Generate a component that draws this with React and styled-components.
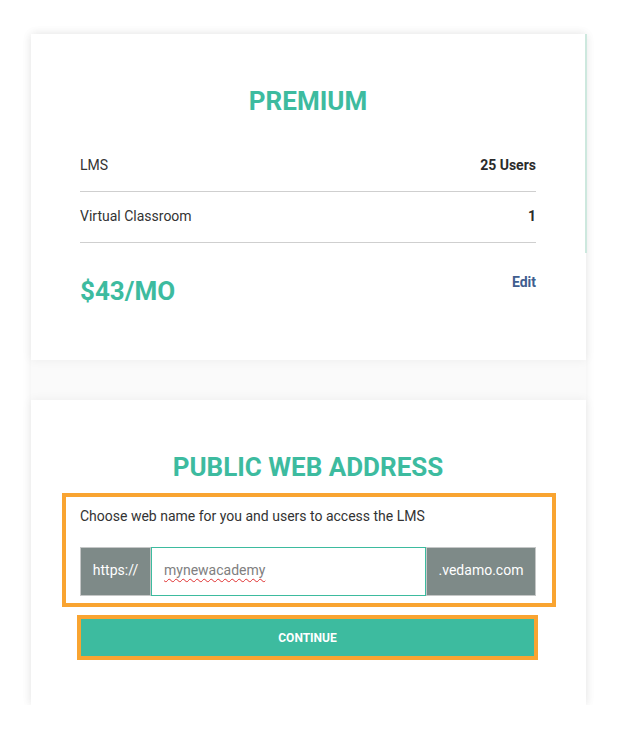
import React from 'react';
import styled, { createGlobalStyle } from 'styled-components';

const GlobalStyle = createGlobalStyle`
  body {
    margin: 0;
    background: #fff;
    font-family: Roboto, 'Liberation Sans', Arial, sans-serif;
    color: #333;
  }
`;

const Page = styled.div`
  padding: 34px 0 0 31px;
`;

const Panel = styled.div`
  position: relative;
  width: 555px;
  display: flex;
  flex-direction: column;
  gap: 40px;
  background: #fafafa;
  box-shadow: 0 0 10px rgba(0, 0, 0, 0.07);
`;

const ScrollThumb = styled.div`
  position: absolute;
  top: 0;
  right: -1px;
  width: 2px;
  height: 219px;
  background: #cde8de;
`;

const Card = styled.section`
  background: #fff;
  padding: 52px 50px ${(p) => p.$bottom}px 49px;
  box-shadow: 0 0 10px rgba(0, 0, 0, 0.06);
  display: flex;
  flex-direction: column;
`;

const Title = styled.h2`
  margin: 0;
  font-size: 26px;
  line-height: 30px;
  font-weight: 700;
  color: #3dbb9f;
  text-align: center;
  text-transform: uppercase;
`;

const Rows = styled.div`
  margin-top: 25px;
`;

const Row = styled.div`
  display: flex;
  justify-content: space-between;
  padding: 14px 0 16px;
  border-bottom: 1px solid #cfcfcf;
  font-size: 14px;
  line-height: 20px;
`;

const Value = styled.span`
  font-weight: 700;
  color: #2b2b2b;
`;

const PriceRow = styled.div`
  display: flex;
  justify-content: space-between;
  align-items: flex-start;
  margin-top: 33px;
`;

const Price = styled.div`
  font-size: 26px;
  line-height: 30px;
  font-weight: 700;
  color: #3dbb9f;
`;

const EditLink = styled.a`
  margin-top: -2px;
  font-size: 14px;
  line-height: 16px;
  font-weight: 700;
  color: #3f5e8f;
  text-decoration: none;
  cursor: pointer;
`;

const Highlight = styled.div`
  border: 4px solid #f9a431;
  margin: ${(p) => p.$margin};
`;

const Field = styled.div`
  padding: 9px 16px 7px 14px;
`;

const Hint = styled.p`
  margin: 0 0 21px;
  font-size: 14px;
  line-height: 20px;
  color: #333;
`;

const AddressGroup = styled.div`
  display: flex;
  height: 49px;
`;

const Addon = styled.div`
  width: ${(p) => p.$width}px;
  box-sizing: border-box;
  display: flex;
  align-items: center;
  justify-content: center;
  padding-bottom: 4px;
  background: #7e8a88;
  border: 1px solid #c5c7c7;
  color: #fff;
  font-size: 14px;
`;

const NameInput = styled.div`
  flex: 1;
  display: flex;
  align-items: center;
  padding: 0 0 4px 12px;
  border: 1px solid #3dbb9f;
  font-size: 14px;
  color: #808080;
  span {
    text-decoration: underline wavy #e03030;
    text-decoration-thickness: 1px;
    text-underline-offset: 3px;
  }
`;

const ContinueButton = styled.button`
  display: block;
  width: 100%;
  height: 37px;
  border: none;
  background: #3dbb9f;
  color: #fff;
  font-family: Roboto, 'Liberation Sans', Arial, sans-serif;
  font-size: 12px;
  font-weight: 700;
  text-transform: uppercase;
  cursor: pointer;
`;

export default function App() {
  return (
    <Page>
      <GlobalStyle />
      <Panel>
        <ScrollThumb />
        <Card $bottom={54}>
          <Title>Premium</Title>
          <Rows>
            <Row>
              <span>LMS</span>
              <Value>25 Users</Value>
            </Row>
            <Row>
              <span>Virtual Classroom</span>
              <Value>1</Value>
            </Row>
          </Rows>
          <PriceRow>
            <Price>$43/MO</Price>
            <EditLink>Edit</EditLink>
          </PriceRow>
        </Card>
        <Card $bottom={45}>
          <Title>Public web address</Title>
          <Highlight $margin="11px -20px 0 -18px">
            <Field>
              <Hint>Choose web name for you and users to access the LMS</Hint>
              <AddressGroup>
                <Addon $width={71}>https://</Addon>
                <NameInput>
                  <span>mynewacademy</span>
                </NameInput>
                <Addon $width={110}>.vedamo.com</Addon>
              </AddressGroup>
            </Field>
          </Highlight>
          <Highlight $margin="8px -2px 0 -3px">
            <ContinueButton>Continue</ContinueButton>
          </Highlight>
        </Card>
      </Panel>
    </Page>
  );
}
